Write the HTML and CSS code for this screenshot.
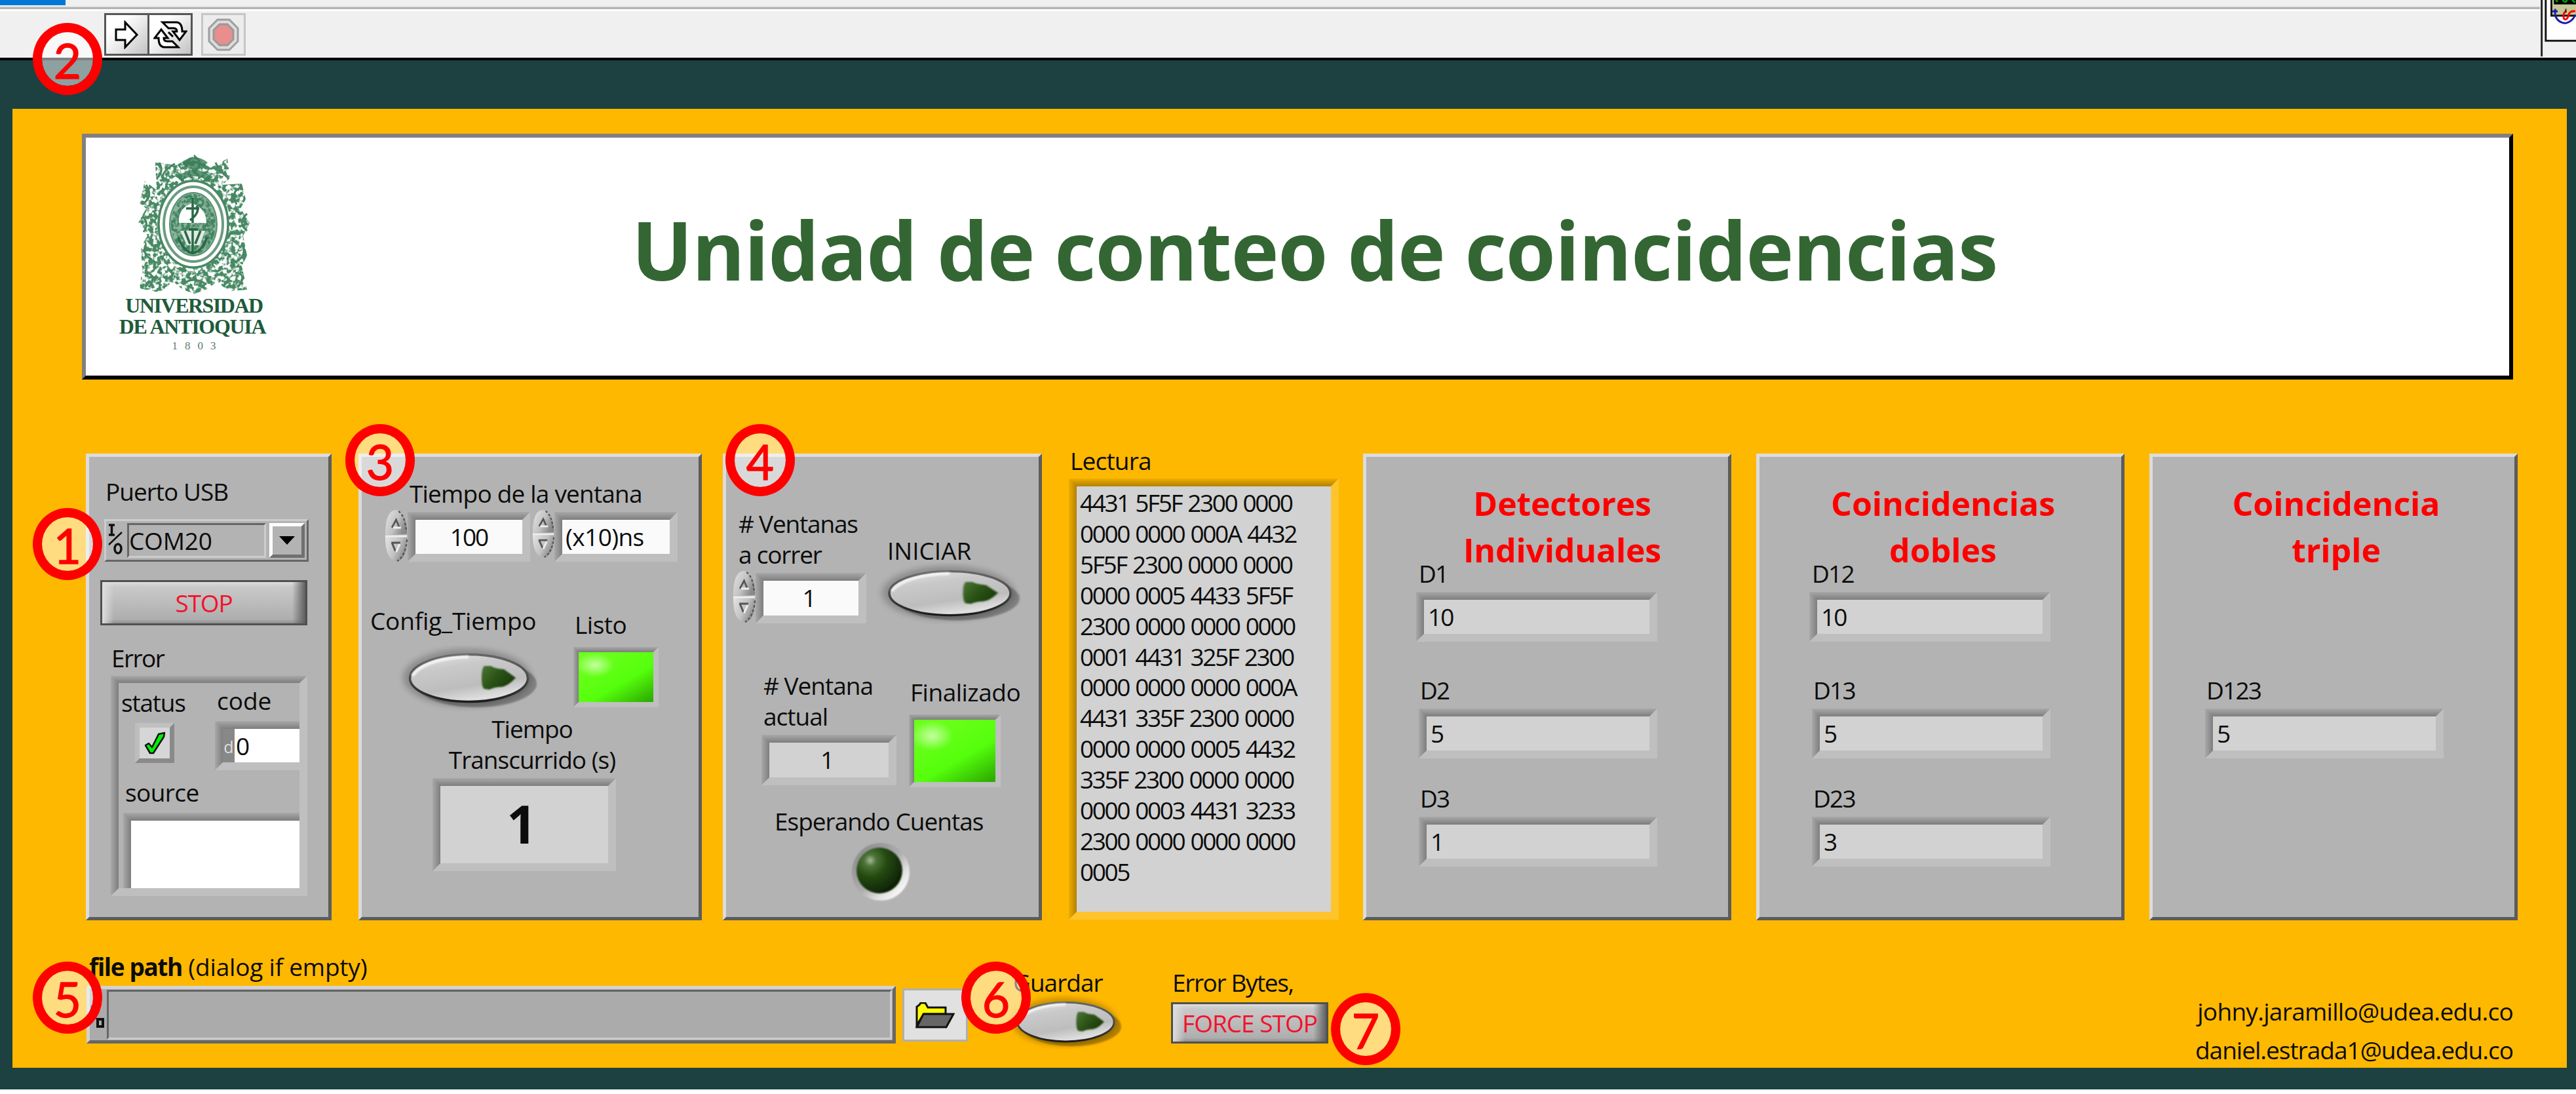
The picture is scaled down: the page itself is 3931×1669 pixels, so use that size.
FILE: index.html
```html
<!DOCTYPE html>
<html lang="es">
<head>
<meta charset="utf-8">
<title>Unidad de conteo de coincidencias</title>
<link rel="stylesheet" href="styles.css">
</head>
<body>
<svg class="defs" width="0" height="0" aria-hidden="true">
  <defs>
    <linearGradient id="metal" x1="0" y1="0" x2="0.4" y2="1">
      <stop offset="0" stop-color="#e6e6e6"/><stop offset="0.35" stop-color="#c9c9c9"/><stop offset="0.75" stop-color="#bdbdbd"/><stop offset="1" stop-color="#dedede"/>
    </linearGradient>
    <linearGradient id="rim" x1="0" y1="0" x2="0" y2="1">
      <stop offset="0" stop-color="#666"/><stop offset="0.5" stop-color="#4a4a4a"/><stop offset="1" stop-color="#1c1c1c"/>
    </linearGradient>
    <linearGradient id="darkgreen" x1="0" y1="0" x2="1" y2="0.6">
      <stop offset="0" stop-color="#4c7634"/><stop offset="0.5" stop-color="#2c5418"/><stop offset="1" stop-color="#1a3a08"/>
    </linearGradient>
    <radialGradient id="bulb" cx="0.3" cy="0.28" r="0.8">
      <stop offset="0" stop-color="#a9bb9f"/><stop offset="0.16" stop-color="#4d7438"/><stop offset="0.45" stop-color="#254a12"/><stop offset="1" stop-color="#0b1c03"/>
    </radialGradient>
    <linearGradient id="socket" x1="0.1" y1="0.1" x2="0.9" y2="0.9">
      <stop offset="0" stop-color="#8c8c8c"/><stop offset="0.5" stop-color="#adadad"/><stop offset="0.75" stop-color="#e0e0e0"/><stop offset="1" stop-color="#fff"/>
    </linearGradient>
    <linearGradient id="knob" x1="0" y1="0" x2="1" y2="0.5">
      <stop offset="0" stop-color="#e4e4e4"/><stop offset="0.6" stop-color="#c2c2c2"/><stop offset="1" stop-color="#8a8a8a"/>
    </linearGradient>
    <filter id="soft" x="-20%" y="-30%" width="140%" height="160%"><feGaussianBlur stdDeviation="5"/></filter>
    <filter id="soften" x="-20%" y="-20%" width="140%" height="140%"><feGaussianBlur stdDeviation="1.3"/></filter>
    <filter id="foliage" x="0" y="0" width="100%" height="100%">
      <feTurbulence type="fractalNoise" baseFrequency="0.16" numOctaves="2" seed="8"/>
      <feColorMatrix type="matrix" values="0 0 0 0 0  0 0 0 0 0  0 0 0 0 0  0 6 0 0 -2.4"/>
      <feComposite in="SourceGraphic" operator="in"/>
    </filter>
    <symbol id="oval" viewBox="0 0 220 100" preserveAspectRatio="none">
      <ellipse cx="108" cy="49" rx="98" ry="44" fill="#000" opacity="0.22" filter="url(#soft)"/>
      <ellipse cx="122" cy="58" rx="92" ry="36" fill="#000" opacity="0.28" filter="url(#soften)"/>
      <ellipse cx="110.5" cy="49.5" rx="90" ry="36" fill="url(#metal)" stroke="url(#rim)" stroke-width="3.5"/>
      <path d="M24 46Q44 19 110 17" fill="none" stroke="#fff" stroke-width="5" opacity="0.7" filter="url(#soften)"/>
      <path d="M134 31L144 31Q150 35 164 36L182 49Q170 62 160 63Q150 63 142 67L134 66Q130 64 130 49Q130 34 134 31Z" fill="url(#darkgreen)" filter="url(#soften)"/>
    </symbol>
    <symbol id="spin" viewBox="0 0 38 80" preserveAspectRatio="none">
      <path d="M1 39Q1 1 19 1Q37 3 37 38Z" fill="url(#knob)"/>
      <path d="M1 42L37 42Q37 79 19 79Q1 77 1 42Z" fill="url(#knob)"/>
      <path d="M23 3Q34 10 36 35M37 46Q35 70 21 79" fill="none" stroke="#555" stroke-width="2.5" stroke-dasharray="4 3"/>
      <path d="M1 41H37" stroke="#eee" stroke-width="3"/>
      <path d="M12 28L19 16L24 27" fill="none" stroke="#555" stroke-width="3"/>
      <path d="M14 28H27" stroke="#efefef" stroke-width="3"/>
      <path d="M11 51H26M12 51L18 64" fill="none" stroke="#555" stroke-width="3"/>
      <path d="M25 53L19 65" stroke="#efefef" stroke-width="3"/>
    </symbol>
  </defs>
</svg>

<header class="toolbar">
  <div class="menu-strip"><div class="menu-mark"></div></div>
  <div class="tools">
    <div class="tool-pair">
      <button class="tool" aria-label="Run">
        <svg width="38" height="44" viewBox="0 0 38 44"><path d="M2 14H16V3L34 22L16 41V30H2Z" fill="#fff" stroke="#000" stroke-width="3"/></svg>
      </button>
      <button class="tool" aria-label="Run continuously">
        <svg width="52" height="44" viewBox="0 0 52 44"><g fill="#fff" stroke="#000" stroke-width="3"><path d="M14 3H36Q44 4 44 17H50L40 30L30 17H36Q36 12 31 12H23Z"/><path d="M38 41H16Q8 40 8 27H2L12 14L22 27H16Q16 32 21 32H29Z"/></g><path d="M23 18L30 25" stroke="#000" stroke-width="3"/></svg>
      </button>
    </div>
    <button class="tool tool-off" aria-label="Abort">
      <svg width="48" height="50" viewBox="0 0 48 50"><path d="M15 2H33L46 15V35L33 48H15L2 35V15Z" fill="#dcdcdc" stroke="#9e9e9e" stroke-width="3"/><path d="M18 9H30L39 18V32L30 41H18L9 32V18Z" fill="#e88e8e" stroke="#999" stroke-width="3"/></svg>
    </button>
  </div>
  <svg class="vi-icon" width="55" height="92" viewBox="0 0 55 92">
    <rect width="55" height="92" fill="#f0f0f0"/>
    <path d="M1.500 0V90" stroke="#222" stroke-width="3"/>
    <rect x="8" y="-5" width="60" height="70" fill="#fff" stroke="#111" stroke-width="3"/>
    <rect x="17" y="-5" width="50" height="30" fill="#c8c896" stroke="#111" stroke-width="3"/>
    <rect x="21" y="-5" width="40" height="12" fill="#000"/>
    <path d="M24 0l3 3M35 0q4 6 7 0M50 0l5 4" stroke="#00a000" stroke-width="3" fill="none"/>
    <path d="M23 14V25Q28 37 40 37Q50 35 55 24M18 18H27" stroke="#1c1ca8" stroke-width="3" fill="none"/>
    <path d="M41 17Q34 22 37 30Q42 34 45 22Q48 17 55 18" stroke="#f00" stroke-width="3" fill="none"/>
    <path d="M40 14V20" stroke="#222" stroke-width="2"/>
  </svg>
</header>

<main class="front">
  <section class="banner">
    <div class="logo">
      <svg width="176" height="216" viewBox="0 0 176 216">
        <path d="M88 2L98 12L112 22L138 8L142 38L130 48L160 46L166 70L158 84L172 106L162 126L168 156L160 172L168 208L140 210L122 196L106 208L88 214L70 208L56 196L34 212L4 206L8 176L6 142L16 126L2 106L14 84L4 76L12 42L30 56L28 14L60 18L78 8Z" fill="#468a64" filter="url(#foliage)"/>
        <path d="M34 14q8 14-4 24M58 16q-14 6-20 20M120 14q6 14 18 22M14 48q12 18-6 30M160 52q-18 4-8 26M8 96q12 10 2 24M168 92q-16 14 0 26M14 138q-8 14 8 24M160 136q10 20-10 30M14 182q18 4 4 22M150 182q20 2 4 22M70 200q16-14 36 0M72 22q14-18 32 0" fill="none" stroke="#4a8465" stroke-width="3"/>
        <path d="M68 14q20-16 40 0q-20 22-40 0ZM62 36q24-22 54 0l-8 6q-20-14-40 0Z" fill="#3a7d56" opacity=".8"/>
        <ellipse cx="86" cy="108" rx="53" ry="66" fill="#fff" stroke="#4a8766" stroke-width="3.500"/>
        <ellipse cx="86" cy="108" rx="45" ry="57" fill="#fff" stroke="#6b9c81" stroke-width="4"/>
        <ellipse cx="86" cy="108" rx="36" ry="48" fill="#8fb39e" stroke="#55906f" stroke-width="2"/>
        <ellipse cx="86" cy="108" rx="34" ry="46" fill="#3f8560" filter="url(#foliage)"/>
        <path d="M64 106Q62 84 84 76Q106 84 106 106Z" fill="#fff"/>
        <path d="M66 118H104L96 140H76Z" fill="#dfe9e3"/>
        <path d="M85 68V106M75 84H95M91 80Q97 90 81 102" stroke="#2a6845" stroke-width="3.500" fill="none"/>
        <path d="M85 114V154M63 128Q71 150 85 152Q99 150 107 128M73 118L81 138M97 118L89 138M79 116H93" stroke="#2a6845" stroke-width="3.500" fill="none"/>
      </svg>
      <div class="logo-name">UNIVERSIDAD</div>
      <div class="logo-name logo-place">DE ANTIOQUIA</div>
      <div class="logo-year">1803</div>
    </div>
    <h1 class="title">Unidad de conteo de coincidencias</h1>
  </section>

  <section class="panels">
    <div class="panel p-port">
      <div class="t port-label">Puerto USB</div>
      <div class="combo">
        <svg class="io" width="24" height="54" viewBox="0 0 24 54"><path d="M2 3H11M2 18H11M6.500 3V18" stroke="#111" stroke-width="3.500"/><path d="M2 33L22 14" stroke="#111" stroke-width="2.500"/><ellipse cx="16" cy="39" rx="5" ry="7" fill="none" stroke="#111" stroke-width="3.500"/></svg>
        <div class="t combo-value">COM20</div>
        <div class="combo-arrow"><svg width="24" height="14" viewBox="0 0 24 14"><path d="M0 0H24L12 13Z"/></svg></div>
      </div>
      <button class="t key stop">STOP</button>
      <div class="t error-label">Error</div>
      <div class="cluster">
        <div class="cluster-top">
          <div class="status-col">
            <div class="t status-label">status</div>
            <div class="status-led"><svg width="33" height="36" viewBox="0 0 33 36"><path d="M2 21L7 18L12 24L22 4L31 2L30 8L14 33L9 33Z" fill="#00f000" stroke="#111" stroke-width="2.500" stroke-linejoin="round"/></svg></div>
          </div>
          <div class="code-col">
            <div class="t code-label">code</div>
            <div class="code-field"><span class="radix">d</span><span class="t code-value">0</span></div>
          </div>
        </div>
        <div class="t source-label">source</div>
        <div class="source-field"></div>
      </div>
    </div>

    <div class="panel p-time">
      <div class="t window-label">Tiempo de la ventana</div>
      <div class="window-row">
        <svg class="spin"><use href="#spin"/></svg>
        <div class="t field window-value">100</div>
        <svg class="spin spin-unit"><use href="#spin"/></svg>
        <div class="t field window-unit">(x10)ns</div>
      </div>
      <div class="config-row">
        <div class="config-col">
          <div class="t config-label">Config_Tiempo</div>
          <svg class="oval oval-config"><use href="#oval"/></svg>
        </div>
        <div class="ready-col">
          <div class="t ready-label">Listo</div>
          <div class="led led-ready"></div>
        </div>
      </div>
      <div class="t elapsed-label">Tiempo<br>Transcurrido (s)</div>
      <div class="field elapsed">1</div>
    </div>

    <div class="panel p-run">
      <div class="run-row">
        <div class="count-col">
          <div class="t count-label"># Ventanas<br>a correr</div>
          <div class="count-row">
            <svg class="spin"><use href="#spin"/></svg>
            <div class="t field count-value">1</div>
          </div>
        </div>
        <div class="start-col">
          <div class="t start-label">INICIAR</div>
          <svg class="oval oval-start"><use href="#oval"/></svg>
        </div>
      </div>
      <div class="current-row">
        <div class="current-col">
          <div class="t current-label"># Ventana<br>actual</div>
          <div class="t field current-value">1</div>
        </div>
        <div class="done-col">
          <div class="t done-label">Finalizado</div>
          <div class="led led-done"></div>
        </div>
      </div>
      <div class="t waiting-label">Esperando Cuentas</div>
      <svg class="bulb" width="91" height="91" viewBox="0 0 91 91"><circle cx="46" cy="46" r="44" fill="url(#socket)" filter="url(#soften)"/><circle cx="44" cy="44" r="35" fill="url(#bulb)" filter="url(#soften)"/></svg>
    </div>

    <div class="reading">
      <div class="t reading-label">Lectura</div>
      <div class="t reading-box">4431 5F5F 2300 0000
0000 0000 000A 4432
5F5F 2300 0000 0000
0000 0005 4433 5F5F
2300 0000 0000 0000
0001 4431 325F 2300
0000 0000 0000 000A
4431 335F 2300 0000
0000 0000 0005 4432
335F 2300 0000 0000
0000 0003 4431 3233
2300 0000 0000 0000
0005</div>
    </div>

    <div class="panel result p-single">
      <h2 class="result-title">Detectores<br>Individuales</h2>
      <div class="measure first"><div class="t measure-label">D1</div><div class="t field measure-value">10</div></div>
      <div class="measure second"><div class="t measure-label">D2</div><div class="t field measure-value">5</div></div>
      <div class="measure third"><div class="t measure-label">D3</div><div class="t field measure-value">1</div></div>
    </div>
    <div class="panel result">
      <h2 class="result-title">Coincidencias<br>dobles</h2>
      <div class="measure first"><div class="t measure-label">D12</div><div class="t field measure-value">10</div></div>
      <div class="measure second"><div class="t measure-label">D13</div><div class="t field measure-value">5</div></div>
      <div class="measure third"><div class="t measure-label">D23</div><div class="t field measure-value">3</div></div>
    </div>
    <div class="panel result">
      <h2 class="result-title">Coincidencia<br>triple</h2>
      <div class="measure only"><div class="t measure-label">D123</div><div class="t field measure-value">5</div></div>
    </div>
  </section>

  <footer class="bottom">
    <div class="file-col">
      <div class="t file-label"><b>file path</b> (dialog if empty)</div>
      <div class="path">
        <svg class="path-mark" width="26" height="64" viewBox="0 0 26 64"><path d="M3 14V33H10" stroke="#222" stroke-width="3" fill="none"/><rect x="12" y="35" width="8" height="11" fill="none" stroke="#111" stroke-width="4"/></svg>
        <div class="path-value"></div>
      </div>
    </div>
    <button class="browse" aria-label="Browse">
      <svg width="60" height="40" viewBox="0 0 60 40"><path d="M2 38V7L6 4L8 1H15L19 8H46V18H13L5 30Z" fill="#ff0" stroke="#111" stroke-width="3"/><path d="M2 38L12 18H58L47 38Z" fill="#666" stroke="#111" stroke-width="3"/></svg>
    </button>
    <div class="save-col">
      <div class="t save-label">Guardar</div>
      <svg class="oval oval-save"><use href="#oval"/></svg>
    </div>
    <div class="force-col">
      <div class="t force-label">Error Bytes,</div>
      <button class="t key force">FORCE STOP</button>
    </div>
    <div class="t mails"><span class="mail-a">johny.jaramillo@udea.edu.co</span><span class="mail-b">daniel.estrada1@udea.edu.co</span></div>
  </footer>
</main>

<div class="mark m1">1</div>
<div class="mark m2">2</div>
<div class="mark m3">3</div>
<div class="mark m4">4</div>
<div class="mark m5">5</div>
<div class="mark m6">6</div>
<div class="mark m7">7</div>
</body>
</html>
```
FILE: styles.css
```css
* { box-sizing: border-box; }

body {
  margin: 0;
  position: relative;
  width: 3931px;
  height: 1669px;
  overflow: hidden;
  background: linear-gradient(#1c4140 1662px, #fff 1662px);
  font-family: "Open Sans", "Noto Sans", sans-serif;
  color: #0c0c0c;
}

button { appearance: none; margin: 0; padding: 0; border: 0; background: none; font: inherit; }
svg { display: block; flex: none; }
.defs { position: absolute; }

.t {
  font-size: 37px;
  line-height: 47px;
  letter-spacing: -1px;
  white-space: nowrap;
}

/* toolbar */
.toolbar {
  display: grid;
  grid-template-columns: 1fr 55px;
  grid-template-rows: 17px 75px;
  height: 92px;
  background: #f0f0f0;
}
.menu-strip { border-bottom: 3px solid #fff; background: linear-gradient(transparent 10px, #b4b4b4 11px); }
.menu-mark { width: 100px; height: 8px; background: #0078d7; }
.tools { display: flex; gap: 13px; padding: 3px 0 0 159px; border-bottom: 4px solid #000; grid-row: 2; }
.tool-pair { display: flex; height: 65px; background: #555; padding: 3px; gap: 3px; }
.tool {
  display: flex;
  align-items: center;
  justify-content: center;
  width: 63px;
  height: 59px;
  background: linear-gradient(135deg, #fff 25%, #e9e9e9 55%, #c2c2c2);
}
.tool-off { width: 68px; height: 65px; border: 3px solid #c6c6c6; background: #ececec; }
.vi-icon { grid-column: 2; grid-row: 1 / 3; border-bottom: 4px solid #000; }

/* front panel */
.front {
  display: flex;
  flex-direction: column;
  width: 3898px;
  height: 1463px;
  margin: 74px 0 0 19px;
  padding: 38px 0 0 106px;
  background: #ffb800;
}

.banner {
  display: flex;
  width: 3710px;
  height: 375px;
  background: #fff;
  border: 6px solid;
  border-color: #808080 #000 #000 #808080;
}
.logo { width: 240px; margin: 24px 0 0 45px; display: flex; flex-direction: column; align-items: center; }
.logo svg { margin-left: 1px; }
.logo-name {
  margin-top: 0;
  font: bold 32px/32px "Liberation Serif", serif;
  letter-spacing: -1.5px;
  color: #1f5b3a;
  white-space: nowrap;
}
.logo-place { letter-spacing: -1.3px; margin-left: -5px; }
.logo-year { margin-top: 4px; font: 17px/20px "Liberation Serif", serif; letter-spacing: 11px; padding-left: 11px; color: #5b8068; }
.title {
  margin: 101px 0 0 548px;
  font-size: 123px;
  line-height: 140px;
  letter-spacing: -1.05px;
  font-weight: 700;
  color: #336633;
  white-space: nowrap;
}

/* panels */
.panels { display: flex; align-items: flex-end; height: 725px; margin: 100px 0 0 6px; }
.panel {
  flex: none;
  height: 712px;
  background: #b3b3b3;
  border: 5px solid;
  border-color: #dcdcdc #5c5c5c #5c5c5c #dcdcdc;
}

/* sunken bevel shared by the fields */
.field, .cluster, .code-field, .source-field, .reading-box, .led {
  border: 12px solid transparent;
  border-image: url("data:image/svg+xml,%3Csvg xmlns='http://www.w3.org/2000/svg' width='36' height='36'%3E%3Cdefs%3E%3ClinearGradient id='v' x2='0' y2='1'%3E%3Cstop stop-opacity='.06'/%3E%3Cstop offset='1' stop-opacity='.3'/%3E%3C/linearGradient%3E%3ClinearGradient id='h'%3E%3Cstop stop-opacity='.06'/%3E%3Cstop offset='1' stop-opacity='.3'/%3E%3C/linearGradient%3E%3C/defs%3E%3Cpath d='M0 0H36L24 12H12Z' fill='url(%23v)'/%3E%3Cpath d='M0 0L12 12V24L0 36Z' fill='url(%23h)'/%3E%3Cpath d='M36 0V36H0L12 24H24V12Z' fill='%23fff' fill-opacity='.17'/%3E%3C/svg%3E") 12;
  background-clip: padding-box;
}
.field { background-color: #d2d2d2; text-align: center; line-height: 52px; }
.window-value, .window-unit, .count-value { background-color: #fafafa; }

.key {
  display: block;
  text-align: center;
  color: #f2122c;
  border: 3px solid #505050;
  background: linear-gradient(90deg, #dedede, transparent 18px, transparent calc(100% - 20px), #5e5e5e),
              linear-gradient(#ddd, #c9c9c9 12%, #aeaeae 90%, #8e8e8e);
}
.led {
  background-image: radial-gradient(ellipse 26% 24% at 22% 26%, #c4ffa0, transparent),
                    linear-gradient(150deg, #6cff1c 15%, #55ff0c 60%, #2fae00 96%);
}
.spin { width: 35px; height: 80px; overflow: visible; }

/* USB port */
.p-port { width: 375px; }
.port-label { margin: 29px 0 0 25px; letter-spacing: -1px; }
.combo {
  display: flex;
  width: 312px;
  height: 65px;
  margin: 19px 0 0 23px;
  padding: 3px 3px 3px 2px;
  border: 3px solid;
  border-color: #ccc #666 #666 #ccc;
}
.combo-value {
  width: 213px;
  height: 53px;
  margin-left: 6px;
  border: 3px solid;
  border-color: #666 #ccc #ccc #666;
  letter-spacing: -0.2px;
}
.combo-arrow {
  display: flex;
  align-items: center;
  justify-content: center;
  width: 54px;
  height: 53px;
  margin-left: 5px;
  border: 5px solid;
  border-color: #fff #707070 #707070 #fff;
}
.stop { width: 316px; height: 69px; margin: 28px 0 0 17px; letter-spacing: -1.2px; }
.error-label { margin: 26px 0 0 34px; letter-spacing: -1.6px; }
.cluster { width: 300px; height: 336px; margin: 4px 0 0 33px; border-top-width: 11px; }
.cluster-top { display: flex; height: 143px; }
.status-col { width: 147px; }
.status-label { margin: 6px 0 0 4px; letter-spacing: -1.2px; }
.status-led {
  display: flex;
  align-items: center;
  justify-content: center;
  width: 60px;
  height: 61px;
  margin: 8px 0 0 25px;
  background: #d6d6d6;
  border: 7px solid;
  border-color: #c0c0c0 #8a8a8a #8a8a8a #bdbdbd;
}
.code-label { margin: 3px 0 0 3px; letter-spacing: 0; }
.code-field { display: flex; width: 129px; height: 75px; margin-top: 8px; border-right: 0; background: #fff; background-clip: padding-box; }
.radix { width: 18px; background: #888; color: #ddd; font: 25px/54px "Open Sans", sans-serif; text-align: center; }
.code-value { margin-left: 2px; line-height: 52px; }
.source-label { margin: 0 0 0 10px; letter-spacing: -0.6px; }
.source-field { width: 269px; height: 115px; margin: 8px 0 0 7px; border-right: 0; border-bottom: 0; background: #fff; background-clip: padding-box; }

/* window time */
.p-time { width: 524px; margin-left: 41px; }
.window-label { margin: 32px 0 0 73px; letter-spacing: -0.8px; }
.window-row { display: flex; height: 80px; margin: 1px 0 0 35px; }
.window-value { width: 187px; height: 76px; margin-top: 4px; letter-spacing: -2px; }
.spin-unit { width: 34px; height: 74px; margin-left: 3px; }
.window-unit { width: 188px; height: 76px; margin-top: 4px; padding-left: 5px; text-align: left; letter-spacing: -0.6px; }
.config-row { display: flex; height: 162px; margin: 66px 0 0 12px; }
.config-col { width: 311px; }
.config-label { letter-spacing: -0.2px; margin-left: 1px; }
.oval { overflow: visible; }
.oval-config { width: 220px; height: 100px; margin: 15px 0 0 41px; }
.ready-label { margin: 6px 0 0 2px; letter-spacing: -0.5px; }
.led-ready { width: 130px; height: 92px; margin-top: 11px; border-width: 8px; }
.elapsed-label { width: 300px; margin: 3px 0 0 110px; text-align: center; }
.elapsed {
  width: 280px;
  height: 142px;
  margin: 5px 0 0 108px;
  padding-right: 8px;
  font-size: 80px;
  font-weight: 700;
  line-height: 114px;
}

/* run */
.p-run { width: 487px; margin-left: 32px; }
.run-row { display: flex; height: 176px; margin-top: 78px; }
.count-col { width: 232px; }
.count-label { margin-left: 19px; letter-spacing: -1.2px; }
.count-row { display: flex; margin: 1px 0 0 10px; }
.count-value { width: 169px; height: 77px; margin-top: 4px; padding-right: 6px; }
.start-label { margin: 41px 0 0 14px; letter-spacing: 0; }
.oval-start { width: 226px; height: 93px; margin: -4px 0 0 -4px; }
.current-row { display: flex; height: 179px; margin-top: 71px; }
.current-col { width: 279px; }
.current-label { margin-left: 57px; }
.current-value { width: 206px; height: 77px; margin: 5px 0 0 54px; padding-right: 6px; }
.done-label { margin: 10px 0 0 2px; letter-spacing: -0.5px; }
.led-done { width: 140px; height: 111px; margin-top: 11px; border-width: 8px; }
.waiting-label { margin: 28px 0 0 74px; }
.bulb { margin: 8px 0 0 190px; }

/* reading */
.reading { width: 412px; margin: 0 0 1px 41px; }
.reading-label { letter-spacing: -0.8px; margin-left: 2px; }
.reading-box {
  height: 673px;
  margin-top: 4px;
  padding: 2px 0 0 5px;
  background-color: #d2d2d2;
  white-space: pre;
  line-height: 46.9px;
  letter-spacing: -2.4px;
  word-spacing: 2px;
}

/* results */
.result { width: 562px; margin-left: 38px; }
.result-title {
  margin: 36px 0 0 8px;
  font-size: 50px;
  line-height: 71px;
  font-weight: 700;
  text-align: center;
  color: #f00;
}
.p-single { margin-left: 37px; }
.p-single .result-title { margin-left: 46px; letter-spacing: -0.2px; }
.measure-label { padding-left: 3px; letter-spacing: -1.8px; }
.measure-value { width: 364px; height: 76px; margin: 5px 0 0 1px; padding-left: 6px; text-align: left; letter-spacing: -2px; }
.first { margin: -24px 0 0 77px; }
.first .measure-value { width: 368px; margin-left: -1px; }
.second { margin: 50px 0 0 79px; }
.third { margin: 37px 0 0 79px; }
.only { margin: 154px 0 0 79px; }

/* footer */
.bottom { display: flex; align-items: flex-start; height: 225px; margin-left: 7px; }
.file-col { width: 1235px; margin-top: 47px; }
.file-label { margin-left: 4px; letter-spacing: -0.2px; }
.file-label b { letter-spacing: -1.4px; }
.path {
  display: flex;
  height: 88px;
  margin-top: 6px;
  padding: 1px 1px 1px 0;
  background: #ababab;
  border: 5px solid;
  border-color: #d2d2d2 #666 #666 #d2d2d2;
}
.path-mark { margin-top: 10px; }
.path-value { flex: 1; border: 3px solid; border-color: #666 #ccc #ccc #666; }
.browse {
  display: flex;
  align-items: center;
  justify-content: center;
  width: 100px;
  height: 81px;
  margin: 104px 0 0 10px;
  background: #e1e1e1;
  border: 3px solid #b0b0b0;
}
.save-col { width: 240px; margin: 71px 0 0 59px; }
.save-label { margin-left: 10px; }
.oval-save { width: 180px; height: 83px; margin-top: -4px; }
.force-col { width: 240px; margin: 71px 0 0 11px; }
.force-label { margin-left: 2px; letter-spacing: -1.4px; }
.force { width: 240px; height: 63px; margin-top: 7px; letter-spacing: -1px; line-height: 56px; }
.mails { display: flex; flex-direction: column; align-items: flex-end; margin: 109px 82px 0 auto; line-height: 59px; }
.mail-a { letter-spacing: -0.7px; }

/* numbered callouts lying over the window */
.mark {
  position: absolute;
  display: flex;
  align-items: center;
  justify-content: center;
  width: 106px;
  height: 110px;
  padding-top: 4px;
  border: 14px solid #f00;
  border-radius: 50%;
  background: rgba(255, 255, 255, 0.5);
  background-clip: padding-box;
  color: #f00;
  font: 73px/82px Lato, sans-serif;
  -webkit-text-stroke: 1.3px #f00;
}
.m1 { left: 50px; top: 775px; }
.m2 { left: 50px; top: 35px; }
.m3 { left: 527px; top: 647px; }
.m4 { left: 1107px; top: 647px; }
.m5 { left: 50px; top: 1467px; }
.m6 { left: 1467px; top: 1467px; }
.m7 { left: 2031px; top: 1515px; }
```
